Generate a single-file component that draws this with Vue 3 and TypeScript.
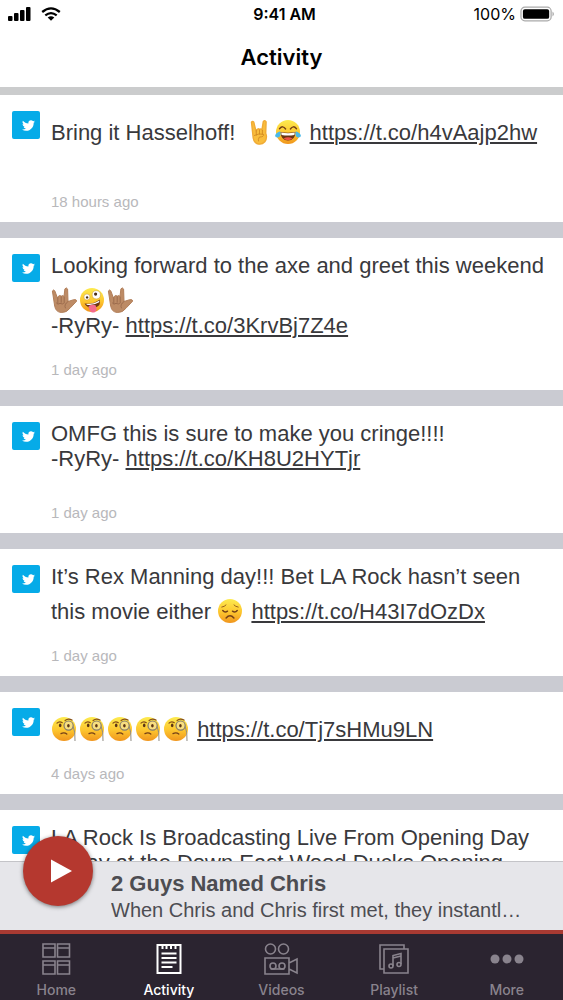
<script setup lang="ts">
import { ref } from 'vue'

type EmojiName = 'horns' | 'joy' | 'love' | 'zany' | 'sad' | 'monocle'

interface Part {
  kind: 'text' | 'emoji' | 'link' | 'break'
  value: string
}

interface Post {
  id: number
  parts: Part[]
  age: string
  roomy?: boolean
}

const text = (value: string): Part => ({ kind: 'text', value })
const emoji = (value: EmojiName): Part => ({ kind: 'emoji', value })
const link = (value: string): Part => ({ kind: 'link', value })
const lineBreak: Part = { kind: 'break', value: '' }

const emojiLabels: Record<string, string> = {
  horns: 'Sign of the horns',
  joy: 'Face with tears of joy',
  love: 'Love-you gesture',
  zany: 'Zany face',
  sad: 'Disappointed face',
  monocle: 'Face with monocle',
}

const posts: Post[] = [
  {
    id: 1,
    parts: [text('Bring it Hasselhoff!\u00a0 '), emoji('horns'), emoji('joy'), text(' '), link('https://t.co/h4vAajp2hw')],
    age: '18 hours ago',
    roomy: true,
  },
  {
    id: 2,
    parts: [
      text('Looking forward to the axe and greet this weekend '),
      emoji('love'), emoji('zany'), emoji('love'),
      lineBreak, text('-RyRy- '), link('https://t.co/3KrvBj7Z4e'),
    ],
    age: '1 day ago',
  },
  {
    id: 3,
    parts: [text('OMFG this is sure to make you cringe!!!!'), lineBreak, text('-RyRy- '), link('https://t.co/KH8U2HYTjr')],
    age: '1 day ago',
    roomy: true,
  },
  {
    id: 4,
    parts: [text('It’s Rex Manning day!!! Bet LA Rock hasn’t seen this movie either '), emoji('sad'), text(' '), link('https://t.co/H43I7dOzDx')],
    age: '1 day ago',
  },
  {
    id: 5,
    parts: [
      emoji('monocle'), emoji('monocle'), emoji('monocle'), emoji('monocle'), emoji('monocle'),
      text(' '), link('https://t.co/Tj7sHMu9LN'),
    ],
    age: '4 days ago',
  },
  {
    id: 6,
    parts: [text('LA Rock Is Broadcasting Live From Opening Day Today at the Down East Wood Ducks Opening')],
    age: '4 days ago',
  },
]

const tabs = ['Home', 'Activity', 'Videos', 'Playlist', 'More']
const activeTab = ref('Activity')
</script>

<template>
  <div class="app">
    <svg class="sprites" aria-hidden="true">
      <defs>
        <linearGradient id="face" x1="0" y1="0" x2="0" y2="1">
          <stop offset="0" stop-color="#fdeb4f" />
          <stop offset="0.55" stop-color="#fdc62f" />
          <stop offset="1" stop-color="#f0951d" />
        </linearGradient>
      </defs>
      <symbol id="emoji-horns" viewBox="0 0 26 26">
        <path d="M4.5 3.2Q5.6 1.6 6.8 3.2L9 12.3 10 10.5Q11.2 9.2 12.4 10.4 13.8 9.3 15 10.6L16.3 2.6Q17.8.6 19.1 2.8L18.7 14.2Q20.6 18.5 17.8 22.8 14.6 26.4 9.7 24.5 6.1 22.5 5.9 16.3Z" fill="#f9bd3c" stroke="#f0ab35" stroke-width="1.4" />
        <path d="M9.3 11.5v4.700M12.5 11v4.1M15.4 11.3v3.700M7.4 16.4Q12.2 13.9 16.6 15.4 17.4 17.8 12.3 18.1 10.9 20.7 11.4 22" fill="none" stroke="#cd841f" stroke-width=".8" stroke-linecap="round" />
      </symbol>
      <symbol id="emoji-joy" viewBox="0 0 26 26">
        <circle cx="13" cy="13" r="12" fill="url(#face)" />
        <path d="M4.5 9.7Q7.8 5.8 10.6 10M15.4 10Q18.2 5.8 21.5 9.7" fill="none" stroke="#754016" stroke-width="1.4" stroke-linecap="round" />
        <path d="M5.5 13Q13 14.6 20.5 13 20 21.5 13 21.5 6 21.5 5.5 13Z" fill="#6b3512" />
        <path d="M6.2 13.5Q13 15 19.8 13.5L19.4 16Q13 17.2 6.6 16Z" fill="#fff" />
        <path d="M8.5 19.5Q13 16.8 17.5 19.5 13 22.8 8.5 19.5Z" fill="#ef5347" />
        <path d="M5.2 12.2Q6.6 17.8 2.8 18.5 0 18.7.1 16.5.4 14.2 5.2 12.2ZM20.8 12.2Q19.4 17.8 23.2 18.5 26 18.7 25.9 16.5 25.6 14.2 20.8 12.2Z" fill="#4ab9e9" />
      </symbol>
      <symbol id="emoji-love" viewBox="0 0 26 26">
        <path d="M1.4 4Q2.5 2 3.8 3.9L6.5 11.1 7.6 9.1Q9 7.9 10.2 9.2 11.8 7.9 13 9.4L13.9 1.9Q15.4-.2 16.6 2.1L17 14.5 22.7 12.7Q25.7 12.2 25.7 14.1L19.4 20.8Q15.8 25.9 10.3 25.5 4.8 25.1 3.7 19.1Z" fill="#bd8b65" stroke="#b17e59" stroke-width="1" />
        <path d="M6.8 10.8v5.400M10.2 9.8v5.500M13.2 10.1v4.800M5.4 16.1Q6.9 18.3 9 16.3 11.2 18.1 13.5 15.8M17 14.5Q12.5 17.7 14.4 21" fill="none" stroke="#946547" stroke-width=".8" stroke-linecap="round" />
      </symbol>
      <symbol id="emoji-zany" viewBox="0 0 26 26">
        <circle cx="13" cy="13" r="12" fill="url(#face)" />
        <circle cx="7.9" cy="10" r="3" fill="#fff" stroke="#b8872b" stroke-width=".4" />
        <circle cx="17.3" cy="7.8" r="4.1" fill="#fff" stroke="#b8872b" stroke-width=".4" />
        <circle cx="8.1" cy="10.4" r="1.2" fill="#492c18" />
        <circle cx="16.6" cy="7.1" r="1.6" fill="#492c18" />
        <path d="M5.5 16.5Q14.5 17.5 20.8 12.4 22.3 18.7 16.4 20.4 9.1 22.5 5.5 16.5Z" fill="#6b3512" />
        <path d="M7.3 16.9Q15 17 20.4 13.4L20.2 15.2Q14.3 18.7 7.8 17.7Z" fill="#fff" />
        <path d="M9.5 19.2Q12.8 16.9 16.6 18.2L17.7 22.5Q16.4 26.3 12.9 25.4 10.5 24.6 9.5 19.2Z" fill="#f36a8c" />
      </symbol>
      <symbol id="emoji-sad" viewBox="0 0 26 26">
        <circle cx="13" cy="13" r="12" fill="url(#face)" />
        <path d="M4.8 9.1Q7.5 8.7 9 7M17 7Q18.5 8.7 21.2 9.1" fill="none" stroke="#98601e" stroke-width="1" stroke-linecap="round" />
        <path d="M5.8 12.5Q7.8 15.1 10.5 13.2M15.5 13.2Q18.2 15.1 20.2 12.5M9.1 20Q13 15.6 16.9 20" fill="none" stroke="#754016" stroke-width="1.5" stroke-linecap="round" />
      </symbol>
      <symbol id="emoji-monocle" viewBox="0 0 26 26">
        <circle cx="13" cy="13" r="12" fill="url(#face)" />
        <path d="M6 7.1Q8.4 4.7 11.3 6.7M14.1 4.5Q17.2 1.9 21 4.1" fill="none" stroke="#865019" stroke-width="1.2" stroke-linecap="round" />
        <ellipse cx="9.2" cy="9.4" rx="1.3" ry="1.8" fill="#5c3516" />
        <circle cx="17.6" cy="9.6" r="4.6" fill="#f8df80" stroke="#847c6d" stroke-width="1.2" />
        <ellipse cx="17.4" cy="9.8" rx="1.3" ry="1.8" fill="#5c3516" />
        <path d="M10 17.6Q13.2 15.8 15.8 18" fill="none" stroke="#754016" stroke-width="1.3" stroke-linecap="round" />
        <path d="M22.2 10.4Q24.4 16 24 25" fill="none" stroke="#8e8a82" stroke-width="1" />
      </symbol>
    </svg>

    <header class="top">
      <div class="status">
        <div class="status-left">
          <svg class="signal" viewBox="0 0 24 14" aria-label="Signal strength">
            <rect x="0" y="9" width="4.500" height="5" rx="1" />
            <rect x="6" y="6" width="4.500" height="8" rx="1" />
            <rect x="12" y="3" width="4.500" height="11" rx="1" />
            <rect x="18" y="0" width="4.500" height="14" rx="1" />
          </svg>
          <svg class="wifi" viewBox="0 0 20 14" aria-label="Wi-Fi">
            <path d="M1.2 5Q10-2.2 18.8 5M4.3 8.4Q10 3.9 15.7 8.4" fill="none" stroke="#000" stroke-width="2.3" />
            <path d="M6.7 10.5Q10 8 13.3 10.5L10 13.8Z" />
          </svg>
        </div>
        <span class="clock">9:41 AM</span>
        <div class="status-right">
          <span>100%</span>
          <svg class="battery" viewBox="0 0 36 16" aria-label="Battery full">
            <rect x="1" y="1" width="31" height="14" rx="4" fill="#fff" stroke="#aaa" stroke-width="1.3" />
            <rect x="3" y="3" width="27" height="10" rx="2" />
            <path d="M33.5 5.5Q36 8 33.5 10.5Z" fill="#999" />
          </svg>
        </div>
      </div>
      <h1>Activity</h1>
    </header>

    <main class="feed">
      <article v-for="post in posts" :key="post.id" class="post">
        <span class="source">
          <svg viewBox="0 0 24 24" aria-label="Twitter">
            <path d="M23.953 4.57a10 10 0 01-2.825.775 4.958 4.958 0 002.163-2.723c-.951.555-2.005.959-3.127 1.184a4.92 4.92 0 00-8.384 4.482C7.69 8.095 4.067 6.13 1.64 3.162a4.822 4.822 0 00-.666 2.475c0 1.71.87 3.213 2.188 4.096a4.904 4.904 0 01-2.228-.616v.06a4.923 4.923 0 003.946 4.827 4.996 4.996 0 01-2.212.085 4.936 4.936 0 004.604 3.417 9.867 9.867 0 01-6.102 2.105c-.39 0-.779-.023-1.17-.067a13.995 13.995 0 007.557 2.209c9.053 0 13.998-7.496 13.998-13.985 0-.21 0-.42-.015-.63A9.935 9.935 0 0024 4.59z" />
          </svg>
        </span>
        <div class="content">
          <p class="message" :class="{ roomy: post.roomy }">
            <template v-for="(part, index) in post.parts" :key="index">
              <svg v-if="part.kind === 'emoji'" class="emoji" role="img" :aria-label="emojiLabels[part.value]">
                <use :href="'#emoji-' + part.value" />
              </svg>
              <a v-else-if="part.kind === 'link'" :href="part.value">{{ part.value }}</a>
              <br v-else-if="part.kind === 'break'" />
              <template v-else>{{ part.value }}</template>
            </template>
          </p>
          <time>{{ post.age }}</time>
        </div>
      </article>
    </main>

    <section class="player" aria-label="Now playing">
      <button class="play" type="button" aria-label="Play">
        <svg viewBox="0 0 22 24"><path d="M0 0L22 12 0 24Z" /></svg>
      </button>
      <h2>2 Guys Named Chris</h2>
      <p>When Chris and Chris first met, they instantly became friends</p>
    </section>

    <nav class="tabs">
      <button
        v-for="tab in tabs"
        :key="tab"
        type="button"
        :class="{ active: tab === activeTab }"
        @click="activeTab = tab"
      >
        <svg viewBox="0 0 36 36" aria-hidden="true">
          <g v-if="tab === 'Home'">
            <path d="M5 3h12v13H5zM19.500 3h12v13h-12zM5 20h12v13H5zM19.500 20h12v13h-12zM5 7h12M19.500 7h12M5 24h12M19.500 24h12" />
          </g>
          <g v-else-if="tab === 'Activity'" stroke-width="2">
            <path d="M6.500 4h23v28h-23z" />
            <path d="M11.500 3v5M15.500 3v5M20 3v5M24.500 3v5M10.500 12.500h15M10.500 17h15M10.500 21.500h15M10.500 26h11" />
          </g>
          <g v-else-if="tab === 'Videos'">
            <circle cx="7.500" cy="8" r="5" />
            <circle cx="20.500" cy="8" r="5" />
            <path d="M2 17h24v16H2zM26 22l8-4v14l-8-4" />
            <circle cx="10" cy="25" r="3" />
            <circle cx="19" cy="25" r="3" />
            <path d="M7.500 28h14" />
          </g>
          <g v-else-if="tab === 'Playlist'">
            <path d="M8 28H4V4h24v4" />
            <path d="M8 8h24v24H8z" />
            <path d="M17 25V14.500l8-2V23M17 17l8-2" />
            <circle cx="15" cy="25" r="2" />
            <circle cx="23" cy="23.500" r="2" />
          </g>
          <g v-else class="dots">
            <circle cx="6" cy="18" r="4.500" />
            <circle cx="18" cy="18" r="4.500" />
            <circle cx="30" cy="18" r="4.500" />
          </g>
        </svg>
        <span>{{ tab }}</span>
      </button>
    </nav>
  </div>
</template>

<style>
body {
  margin: 0;
}
</style>

<style scoped>
.app {
  display: flex;
  flex-direction: column;
  height: 100vh;
  overflow: hidden;
  background: #fff;
  color: #39393c;
  font-family: "Liberation Sans", Arial, sans-serif;
}

.sprites {
  position: absolute;
  width: 0;
  height: 0;
}

h1,
h2,
p {
  margin: 0;
}

.top {
  flex: none;
  border-bottom: 8px solid #cbcccd;
  color: #000;
  font-family: Inter, sans-serif;
}

.status {
  display: grid;
  grid-template-columns: 1fr auto 1fr;
  align-items: center;
  height: 28px;
  padding: 0 8px;
  font-size: 16px;
}

.clock {
  padding-left: 6px;
  font-weight: 600;
}

.status-left,
.status-right {
  display: flex;
  align-items: center;
  gap: 9px;
}

.status-right {
  justify-content: flex-end;
  gap: 4px;
}

.signal {
  width: 24px;
  height: 14px;
}

.wifi {
  width: 20px;
  height: 14px;
}

.battery {
  width: 35px;
  height: 16px;
}

h1 {
  height: 59px;
  font-size: 22px;
  font-weight: 600;
  line-height: 59px;
  text-align: center;
}

.feed {
  flex: 1;
  min-height: 0;
  overflow: hidden;
  display: flex;
  flex-direction: column;
  gap: 16px;
  background: #cacbd2;
}

.post {
  flex: none;
  display: flex;
  gap: 11px;
  padding: 15px 12px 10px;
  background: #fff;
}

.source {
  flex: none;
  display: flex;
  align-items: center;
  justify-content: flex-end;
  box-sizing: border-box;
  width: 28px;
  height: 28px;
  margin-top: 1px;
  padding-right: 5px;
  border-radius: 2px;
  background: #06abe8;
}

.source svg {
  width: 13px;
  height: 13px;
  fill: #fff;
}

.content {
  flex: 1;
  min-width: 0;
}

.message {
  margin-bottom: 22px;
  font-size: 22px;
  line-height: 25px;
}

.roomy {
  min-height: 60px;
}

.message a {
  color: inherit;
  text-decoration: underline;
  text-decoration-thickness: 2px;
  text-underline-offset: 2px;
}

.emoji {
  width: 26px;
  height: 26px;
  margin: 9px 2px 0 0;
  vertical-align: -5px;
}

time {
  display: block;
  color: #b8b8bb;
  font-size: 15px;
  line-height: 20px;
}

.player {
  position: relative;
  flex: none;
  padding: 9px 36px 6px 111px;
  border-top: 1px solid #c4c4c8;
  background: #e6e6ea;
  color: #4d4d52;
}

.player h2 {
  font-size: 22px;
  line-height: 26px;
}

.player p {
  overflow: hidden;
  font-size: 20px;
  line-height: 27px;
  text-overflow: ellipsis;
  white-space: nowrap;
}

.play {
  position: absolute;
  top: -26px;
  left: 23px;
  display: flex;
  align-items: center;
  justify-content: center;
  width: 70px;
  height: 70px;
  padding: 0 0 0 6px;
  border: 0;
  border-radius: 50%;
  background: #b5382f;
  box-shadow: 0 1px 4px rgba(0, 0, 0, 0.5);
}

.play svg {
  width: 21px;
  height: 24px;
  fill: #fff;
}

.tabs {
  flex: none;
  display: grid;
  grid-template-columns: repeat(5, 1fr);
  border-top: 4px solid #a83a32;
  background: #2b2430;
}

.tabs button {
  display: flex;
  flex-direction: column;
  align-items: center;
  gap: 4px;
  height: 66px;
  padding: 7px 0 0;
  border: 0;
  background: none;
  color: #89838d;
  font-family: Inter, sans-serif;
  font-size: 14px;
  font-weight: 500;
  line-height: 18px;
}

.tabs .active {
  color: #fff;
}

.tabs svg {
  width: 36px;
  height: 36px;
  fill: none;
  stroke: currentColor;
  stroke-width: 1.6;
}

.tabs .dots {
  fill: currentColor;
  stroke: none;
}
</style>
